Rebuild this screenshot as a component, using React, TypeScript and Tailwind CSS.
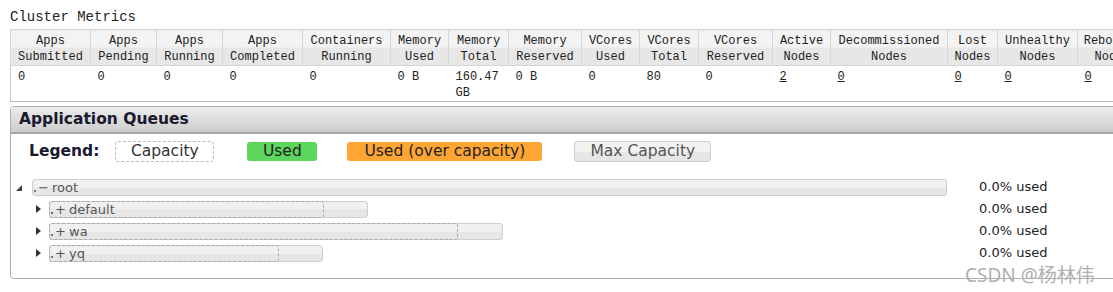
import React from "react";

const mono = { fontFamily: '"Liberation Mono", "Noto Sans CJK SC", monospace' };
const sans = { fontFamily: '"DejaVu Sans", Verdana, sans-serif' };

const columns: { top: string; bottom: string; w: number; value: string; link?: boolean; extra?: string }[] = [
  { top: "Apps", bottom: "Submitted", w: 80, value: "0" },
  { top: "Apps", bottom: "Pending", w: 66, value: "0" },
  { top: "Apps", bottom: "Running", w: 66, value: "0" },
  { top: "Apps", bottom: "Completed", w: 80, value: "0" },
  { top: "Containers", bottom: "Running", w: 88, value: "0" },
  { top: "Memory", bottom: "Used", w: 58, value: "0 B" },
  { top: "Memory", bottom: "Total", w: 60, value: "160.47", extra: "GB" },
  { top: "Memory", bottom: "Reserved", w: 73, value: "0 B" },
  { top: "VCores", bottom: "Used", w: 58, value: "0" },
  { top: "VCores", bottom: "Total", w: 59, value: "80" },
  { top: "VCores", bottom: "Reserved", w: 74, value: "0" },
  { top: "Active", bottom: "Nodes", w: 58, value: "2", link: true },
  { top: "Decommissioned", bottom: "Nodes", w: 117, value: "0", link: true },
  { top: "Lost", bottom: "Nodes", w: 50, value: "0", link: true },
  { top: "Unhealthy", bottom: "Nodes", w: 80, value: "0", link: true },
  { top: "Rebooted", bottom: "Nodes", w: 70, value: "0", link: true },
];

const queues = [
  { name: "default", max: 319, cap: 275 },
  { name: "wa", max: 454, cap: 409 },
  { name: "yq", max: 274, cap: 230 },
];

function Bar({ label, sign, max, cap }: { label: string; sign: string; max: number; cap?: number }) {
  return (
    <div
      className="relative h-[17px] rounded-[3px] border border-[#cfcfcf] bg-[linear-gradient(#f0f0f0_50%,#e6e6e6_50%)]"
      style={{ width: max }}
    >
      {cap !== undefined && (
        <div
          className="absolute -left-px -top-px h-[17px] rounded-[3px] border border-dashed border-[#aaaaaa]"
          style={{ width: cap }}
        />
      )}
      <div className="relative flex h-full items-center text-[13px] leading-none text-[#555]">
        <span className="ml-[1px] mt-[8px] h-[2px] w-[2px] bg-[#777]" />
        <span className="ml-[2px] w-[11px] text-center">{sign}</span>
        <span className="ml-[3px]">{label}</span>
      </div>
    </div>
  );
}

export default function App() {
  return (
    <div className="relative h-[292px] w-[1113px] overflow-hidden bg-white text-[#222]">
      <div className="pl-[10px] pt-[8px] text-[14px] leading-[18px] text-[#222]" style={mono}>
        Cluster Metrics
      </div>

      <table
        className="ml-[10px] mt-[3px] w-[1125px] table-fixed border-collapse text-[12px] leading-[16px]"
        style={mono}
      >
        <colgroup>
          {columns.map((c, i) => (
            <col key={i} style={{ width: c.w }} />
          ))}
        </colgroup>
        <thead>
          <tr>
            {columns.map((c, i) => (
              <th
                key={i}
                className="h-[35px] border border-[#d6d6d6] bg-[linear-gradient(#f3f3f3_50%,#e7e7e7_50%)] px-0 pt-[3px] pb-0 text-center font-normal text-[#222]"
              >
                <div>{c.top}</div>
                <div>{c.bottom}</div>
              </th>
            ))}
          </tr>
        </thead>
        <tbody>
          <tr className="border-b border-[#b8b8b8]">
            {columns.map((c, i) => (
              <td
                key={i}
                className={`h-[33px] pl-[7px] align-top pt-[3px] ${i === 0 ? "border-l border-[#c8c8c8]" : ""}`}
              >
                {c.link ? <span className="underline">{c.value}</span> : c.value}
                {c.extra && <div>{c.extra}</div>}
              </td>
            ))}
          </tr>
        </tbody>
      </table>

      <div
        className="ml-[10px] mt-[4px] w-[1120px] rounded-tl-[4px] rounded-bl-[4px] border border-[#b0b0b0] pb-[14px]"
        style={sans}
      >
        <div className="flex h-[27px] items-center rounded-tl-[3px] border-b-2 border-[#a8a8a8] bg-[linear-gradient(#ececec,#cdcdcd)] pl-[8px] text-[15.5px] font-bold text-[#1a1a2e]">
          Application Queues
        </div>

        <div className="flex items-center pl-[18px] pt-[7px] text-[15.5px] leading-none">
          <span className="font-bold text-[#1a1a2e]">Legend:</span>
          <span className="ml-[16px] flex h-[21px] w-[99px] items-center justify-center rounded-[3px] border border-dashed border-[#bbbbbb] text-[#333]">
            Capacity
          </span>
          <span className="ml-[33px] flex h-[19px] w-[70px] items-center justify-center rounded-[3px] bg-[#5cd65c] text-[#222]">
            Used
          </span>
          <span className="ml-[30px] flex h-[19px] w-[195px] items-center justify-center rounded-[3px] bg-[#ffa533] text-[#222]">
            Used (over capacity)
          </span>
          <span className="ml-[32px] flex h-[21px] w-[137px] items-center justify-center rounded-[3px] border border-[#cccccc] bg-[linear-gradient(#f2f2f2_50%,#e6e6e6_50%)] text-[#555]">
            Max Capacity
          </span>
        </div>

        <div className="mt-[14px] text-[13px]">
          <div className="flex h-[22px] items-center">
            <div className="flex w-[968px] items-center pl-[5px]">
              <div className="w-[16px]">
                <svg width="6" height="6" viewBox="0 0 6 6" className="mt-[2px]">
                  <polygon points="6,0 6,6 0,6" fill="#444" />
                </svg>
              </div>
              <Bar label="root" sign="−" max={915} />
            </div>
            <span className="text-[#222]">0.0% used</span>
          </div>
          {queues.map((q) => (
            <div key={q.name} className="flex h-[22px] items-center">
              <div className="flex w-[968px] items-center pl-[25px]">
                <div className="w-[13px]">
                  <svg width="5" height="8" viewBox="0 0 5 8">
                    <polygon points="0,0 5,4 0,8" fill="#333" />
                  </svg>
                </div>
                <Bar label={q.name} sign="+" max={q.max} cap={q.cap} />
              </div>
              <span className="text-[#222]">0.0% used</span>
            </div>
          ))}
        </div>
      </div>

      <div
        className="absolute left-[965px] top-[263px] text-[19px] leading-[24px] text-[#b0b0b0]"
        style={{ fontFamily: '"Noto Sans", "Noto Sans CJK SC", sans-serif' }}
      >
        CSDN @杨林伟
      </div>
    </div>
  );
}
